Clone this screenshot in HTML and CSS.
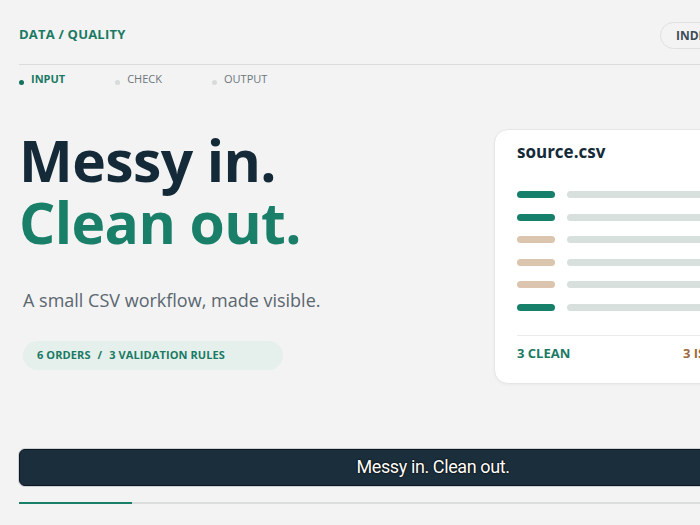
FILE: index.html
```html
<!DOCTYPE html>
<html lang="en">
<head>
<meta charset="utf-8">
<title>Data / Quality</title>
<link rel="stylesheet" href="styles.css">
</head>
<body>
<div class="page">
  <header class="topbar">
    <div class="brand">DATA / QUALITY</div>
    <div class="pill">INDEX OF STEPS · 01–03</div>
  </header>
  <nav class="steps">
    <span class="step active"><span class="dot"></span>INPUT</span>
    <span class="step"><span class="dot"></span>CHECK</span>
    <span class="step"><span class="dot"></span>OUTPUT</span>
  </nav>
  <section class="hero">
    <div class="intro">
      <h1 class="title"><span class="dark">Messy in.</span><span class="green">Clean out.</span></h1>
      <p class="lead">A small CSV workflow, made visible.</p>
      <div class="badge">6 ORDERS <span class="sep">/</span> 3 VALIDATION RULES</div>
    </div>
    <div class="card">
      <div class="card-title">source.csv</div>
      <div class="rows">
        <div class="row"><span class="tag ok"></span><span class="line"></span></div>
        <div class="row"><span class="tag ok"></span><span class="line"></span></div>
        <div class="row"><span class="tag bad"></span><span class="line"></span></div>
        <div class="row"><span class="tag bad"></span><span class="line"></span></div>
        <div class="row"><span class="tag bad"></span><span class="line"></span></div>
        <div class="row"><span class="tag ok"></span><span class="line"></span></div>
      </div>
      <div class="card-foot">
        <span class="clean">3 CLEAN</span>
        <span class="issues">3 ISSUES</span>
      </div>
    </div>
  </section>
  <div class="caption">Messy in. Clean out.</div>
  <div class="progress"><div class="progress-fill"></div></div>
</div>
</body>
</html>
```
FILE: styles.css
```css
html, body {
  margin: 0;
  padding: 0;
  background: #f3f3f3;
  overflow: hidden;
}
body {
  font-family: "Open Sans", "Noto Sans", sans-serif;
  color: #142a38;
}
.page {
  width: 828px;
  padding: 0 19px;
}
.topbar {
  display: flex;
  justify-content: space-between;
  align-items: center;
  padding: 22px 0 15px;
  border-bottom: 1px solid #dcdcdc;
}
.brand {
  font-size: 13px;
  font-weight: 700;
  color: #1a7a63;
  letter-spacing: 0.2px;
  line-height: 18px;
  margin-top: -4px;
}
.pill {
  width: 187px;
  box-sizing: border-box;
  height: 27px;
  line-height: 25px;
  padding: 0 15px;
  border: 1px solid #e0e0e0;
  border-radius: 14px;
  font-size: 12px;
  font-weight: 700;
  color: #3b4b57;
  white-space: nowrap;
}
.steps {
  display: flex;
  gap: 50px;
  padding-top: 7px;
  font-size: 11px;
  line-height: 14px;
}
.step {
  display: inline-flex;
  align-items: flex-end;
  gap: 7px;
  color: #6c767d;
}
.step.active {
  color: #1a7a63;
  font-weight: 700;
}
.dot {
  width: 5px;
  height: 5px;
  border-radius: 50%;
  background: #d6dcda;
  margin-bottom: 1px;
}
.step.active .dot {
  background: #16705c;
}
.hero {
  display: grid;
  grid-template-columns: 1fr 353px;
  column-gap: 24px;
  align-items: start;
  margin-top: 43px;
}
.title {
  margin: 0;
  font-size: 57px;
  line-height: 62px;
  font-weight: 700;
  letter-spacing: -0.6px;
}
.title span {
  display: block;
}
.dark { color: #142a38; }
.green { color: #1a7f68; }
.lead {
  margin: 35px 0 0 4px;
  font-size: 18px;
  line-height: 24px;
  color: #5a6670;
}
.badge {
  display: inline-block;
  margin: 29px 0 0 4px;
  width: 260px;
  box-sizing: border-box;
  height: 29px;
  line-height: 28px;
  padding: 0 14px;
  border-radius: 15px;
  background: #e5f0ec;
  font-size: 11px;
  font-weight: 700;
  color: #1a7a63;
  white-space: nowrap;
  letter-spacing: 0.1px;
}
.sep {
  margin: 0 4px;
}
.card {
  background: #fff;
  border: 1px solid #e6e6e6;
  border-radius: 14px;
  padding: 11px 22px 21px;
  box-shadow: 0 1px 3px rgba(0,0,0,0.04);
}
.card-title {
  font-size: 17px;
  font-weight: 700;
  line-height: 22px;
  color: #142a38;
}
.rows {
  display: flex;
  flex-direction: column;
  gap: 15.6px;
  margin-top: 28px;
}
.row {
  display: flex;
  gap: 12px;
  height: 7px;
}
.tag {
  width: 38px;
  height: 7px;
  border-radius: 4px;
  flex: none;
}
.tag.ok { background: #17806a; }
.tag.bad { background: #dbc5ae; }
.line {
  flex: 1;
  height: 7px;
  border-radius: 4px;
  background: #d7e0dd;
}
.card-foot {
  display: grid;
  grid-template-columns: 1fr 1fr;
  column-gap: 25px;
  margin-top: 24px;
  padding-top: 8px;
  border-top: 1px solid #ebebeb;
  font-size: 13px;
  font-weight: 700;
  line-height: 18px;
}
.clean { color: #1a7a63; }
.issues { color: #9a6a3c; }
.caption {
  margin-top: 65px;
  height: 35px;
  line-height: 33px;
  background: #1b2e3b;
  border: 1px solid #0a1620;
  box-shadow: 0 0 0 1px #cdd1d4;
  border-radius: 6px;
  text-align: center;
  color: #fff;
  font-family: "Roboto", sans-serif;
  font-size: 18px;
  letter-spacing: -0.4px;
  text-shadow: 0 0 2px #000, 0 0 1px #000;
}
.progress {
  margin-top: 16px;
  height: 2px;
  background: #dcdedd;
}
.progress-fill {
  width: 113px;
  height: 2px;
  background: #1a7f68;
}
```
